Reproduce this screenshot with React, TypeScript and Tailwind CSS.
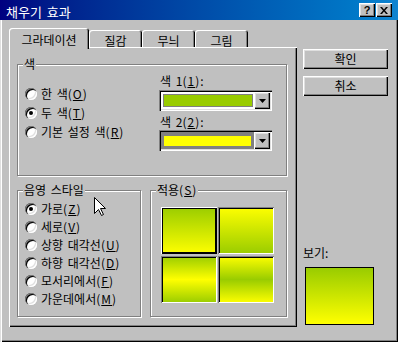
import React from 'react';

const raised =
  'shadow-[inset_1px_1px_#fff,inset_-1px_-1px_#000,inset_-2px_-2px_#808080,inset_2px_2px_#dfdfdf]';
const sunken =
  'shadow-[inset_1px_1px_#808080,inset_2px_2px_#000,inset_-1px_-1px_#fff,inset_-2px_-2px_#dfdfdf]';

const Hot = ({ k }: { k: string }) => (
  <span className="tracking-[1px]">
    (<u>{k}</u>)
  </span>
);

const Radio = ({ checked }: { checked?: boolean }) => (
  <span className={`w-3 h-3 rounded-full bg-white flex items-center justify-center shrink-0 ${sunken}`}>
    {checked && <span className="w-1 h-1 rounded-full bg-black" />}
  </span>
);

const RadioRow = ({ label, hot, checked, h }: { label: string; hot: string; checked?: boolean; h: string }) => (
  <div className={`flex items-center gap-[4px] ${h}`}>
    <Radio checked={checked} />
    <span className="whitespace-nowrap">
      {label}
      <Hot k={hot} />
    </span>
  </div>
);

const Group = ({ label, className, children }: { label: React.ReactNode; className: string; children?: React.ReactNode }) => (
  <div className={`relative border border-[#808080] shadow-[1px_1px_#fff,inset_1px_1px_#fff] ${className}`}>
    <span className="absolute -top-[7px] left-[5px] bg-[#c0c0c0] px-[1px] leading-[12px] whitespace-nowrap">{label}</span>
    {children}
  </div>
);

const DropButton = () => (
  <div className={`w-[16px] h-[17px] bg-[#c0c0c0] flex items-center justify-center ${raised}`}>
    <svg width="7" height="4" viewBox="0 0 7 4">
      <path d="M0 0h7L3.5 4z" fill="#000" />
    </svg>
  </div>
);

const TitleBar = () => (
  <div className="h-[20px] bg-gradient-to-r from-[#000080] to-[#1084d0] flex items-center justify-between pl-[6px] pr-[6px]">
    <span className="text-white text-[13px] leading-[13px] pt-[2px]">채우기 효과</span>
    <div className="flex">
      <div className={`w-[16px] h-[14px] bg-[#c0c0c0] flex items-center justify-center font-['Liberation_Sans',sans-serif] font-bold text-[11px] leading-[11px] ${raised}`}>
        ?
      </div>
      <div className={`w-[16px] h-[14px] ml-[1px] bg-[#c0c0c0] flex items-center justify-center ${raised}`}>
        <svg width="8" height="7" viewBox="0 0 8 7">
          <path d="M0 0h2l2 2.5L6 0h2L5 3.5 8 7H6L4 4.5 2 7H0l3-3.5z" fill="#000" />
        </svg>
      </div>
    </div>
  </div>
);

const tabShadow = 'shadow-[inset_1px_1px_#fff,inset_-1px_0_#000,inset_-2px_0_#808080]';

const Tiles = () => {
  const tiles = [
    { bg: 'bg-[linear-gradient(to_bottom,#99cc00,#ffff00)]', sel: true },
    { bg: 'bg-[linear-gradient(to_bottom,#ffff00,#99cc00)]' },
    { bg: 'bg-[linear-gradient(to_bottom,#99cc00,#ffff00_50%,#99cc00)]' },
    { bg: 'bg-[linear-gradient(to_bottom,#ffff00,#99cc00_50%,#ffff00)]' },
  ];
  return (
    <div className="grid grid-cols-[56px_56px] gap-x-[1px] gap-y-[2px]">
      {tiles.map((t, i) => (
        <div
          key={i}
          className={`h-[47px] ${t.bg} ${
            t.sel
              ? 'shadow-[inset_1px_1px_#fff,inset_-1px_-1px_#000,inset_2px_2px_#000,inset_-2px_-2px_#000]'
              : 'shadow-[inset_1px_1px_#808080,inset_-1px_-1px_#fff,inset_2px_2px_#000]'
          }`}
        />
      ))}
    </div>
  );
};

export default function App() {
  return (
    <div className="relative w-[398px] h-[342px] overflow-hidden bg-[#c0c0c0] font-['Noto_Sans_CJK_KR',sans-serif] text-[12px] leading-[12px] text-black [word-spacing:2px] shadow-[inset_1px_0_#dfdfdf,inset_2px_0_#fff,inset_-1px_-1px_#000,inset_-2px_-2px_#808080]">
      <TitleBar />
      <div className="flex pl-[9px] pt-[8px] gap-[6px]">
        <div className="w-[288px]">
          {/* tabs */}
          <div className="flex items-end h-[19px]">
            <div className={`relative z-10 w-[80px] h-[21px] -mb-[2px] pt-[3px] bg-[#c0c0c0] rounded-t-[3px] flex items-center justify-center ${tabShadow}`}>
              그라데이션
            </div>
            {['질감', '무늬', '그림'].map((t) => (
              <div key={t} className={`w-[53px] h-[17px] pt-[4px] rounded-t-[3px] flex items-center justify-center ${tabShadow}`}>
                {t}
              </div>
            ))}
          </div>

          {/* panel */}
          <div className="w-[288px] h-[280px] pt-[17px] pl-[8px] pr-[10px] shadow-[inset_1px_1px_#fff,inset_-1px_-1px_#000,inset_-2px_-2px_#808080]">
            <Group label="색" className="h-[112px] flex justify-between">
              <div className="flex flex-col pt-[19px] pl-[7px]">
                <RadioRow h="h-[19px]" label="한 색" hot="O" />
                <RadioRow h="h-[19px]" label="두 색" hot="T" checked />
                <RadioRow h="h-[19px]" label="기본 설정 색" hot="R" />
              </div>
              <div className="flex flex-col pt-[9px] pr-[14px]">
                <div className="h-[13px] pl-[1px] flex items-center whitespace-nowrap">
                  색 1<Hot k="1" />:
                </div>
                <div className={`mt-[3px] w-[113px] h-[21px] bg-white flex items-center pl-[4px] pr-[2px] ${sunken}`}>
                  <div className="w-[90px] h-[13px] border border-[#808080] bg-[#99cc00]" />
                  <div className="ml-auto">
                    <DropButton />
                  </div>
                </div>
                <div className="mt-[4px] h-[13px] pl-[1px] flex items-center whitespace-nowrap">
                  색 2<Hot k="2" />:
                </div>
                <div className={`mt-[2px] w-[113px] h-[21px] bg-white flex items-center pl-[2px] pr-[2px] ${sunken}`}>
                  <div className="w-[93px] h-[17px] bg-[#808080] flex items-center justify-center">
                    <div className="w-[87px] h-[10px] bg-[#ffff00]" />
                  </div>
                  <div className="ml-auto">
                    <DropButton />
                  </div>
                </div>
              </div>
            </Group>

            <div className="flex gap-[9px] mt-[14px]">
              <Group label="음영 스타일" className="w-[124px] h-[127px]">
                <div className="flex flex-col pt-[9px] pl-[7px]">
                  <RadioRow h="h-[18px]" label="가로" hot="Z" checked />
                  <RadioRow h="h-[18px]" label="세로" hot="V" />
                  <RadioRow h="h-[18px]" label="상향 대각선" hot="U" />
                  <RadioRow h="h-[18px]" label="하향 대각선" hot="D" />
                  <RadioRow h="h-[18px]" label="모서리에서" hot="F" />
                  <RadioRow h="h-[18px]" label="가운데에서" hot="M" />
                </div>
              </Group>
              <Group
                label={
                  <>
                    적용<Hot k="S" />
                  </>
                }
                className="w-[137px] h-[127px] pt-[16px] pl-[10px]"
              >
                <Tiles />
              </Group>
            </div>
          </div>
        </div>

        {/* right column */}
        <div className="w-[85px] pt-[21px] flex flex-col">
          <div className={`h-[20px] flex items-center justify-center ${raised}`}>확인</div>
          <div className={`mt-[7px] h-[20px] flex items-center justify-center ${raised}`}>취소</div>
          <div className="mt-[151px] h-[12px] flex items-center">보기:</div>
          <div className="mt-[8px] ml-[2px] w-[69px] h-[58px] border border-black bg-[linear-gradient(to_bottom,#99cc00,#ffff00)]" />
        </div>
      </div>

      {/* mouse pointer */}
      <svg className="absolute left-[94px] top-[197px]" width="13" height="20" viewBox="0 0 13 20">
        <path d="M0.5 0.5V16.5L4.5 12.5L7.5 18.5L9.5 17.5L6.5 11.5H11.5Z" fill="#fff" stroke="#000" strokeWidth="1" />
      </svg>
    </div>
  );
}
